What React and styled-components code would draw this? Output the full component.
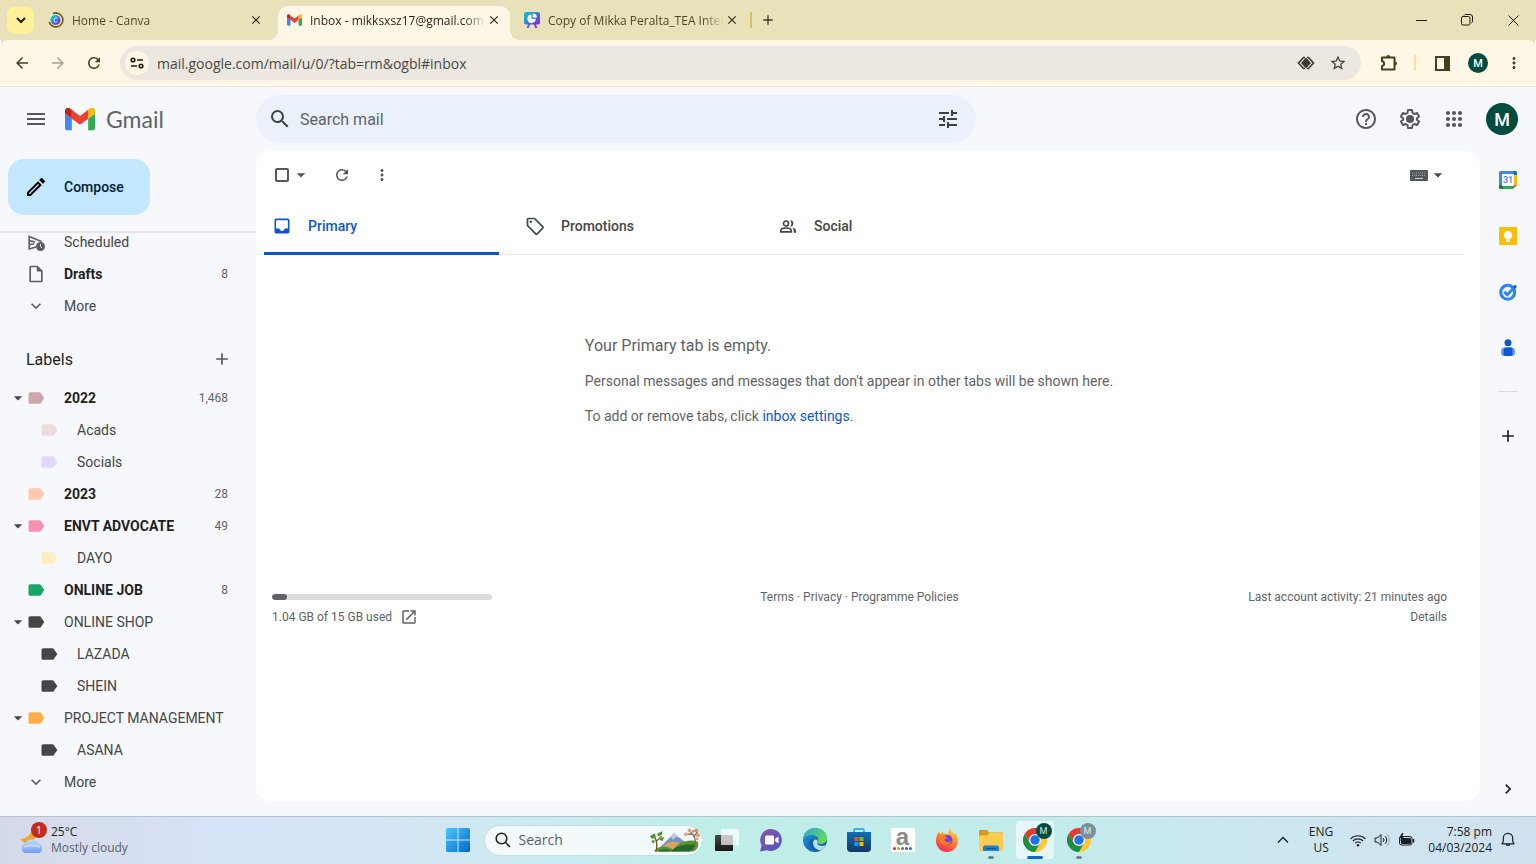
import React from 'react';
import styled, { createGlobalStyle, css } from 'styled-components';
import {
  MdAdd,
  MdArrowBack,
  MdArrowDropDown,
  MdArrowForward,
  MdClose,
  MdHelpOutline,
  MdInbox,
  MdKeyboardArrowDown,
  MdLabel,
  MdMenu,
  MdMoreVert,
  MdOpenInNew,
  MdOutlineEdit,
  MdOutlineInsertDriveFile,
  MdChevronRight,
  MdRefresh,
  MdSearch,
  MdStarOutline,
  MdTune,
} from 'react-icons/md';

const tabs = [
  { id: 'canva', title: 'Home - Canva', icon: <CanvaIcon /> },
  { id: 'gmail', title: 'Inbox - mikksxsz17@gmail.com', icon: <GmailIcon size={15} />, active: true },
  { id: 'copy', title: 'Copy of Mikka Peralta_TEA Inter', icon: <SlidesIcon /> },
];

const folders = [
  { name: 'Scheduled', icon: <ScheduledIcon /> },
  { name: 'Drafts', icon: <MdOutlineInsertDriveFile />, count: '8', unread: true },
  { name: 'More', icon: <MdKeyboardArrowDown /> },
];

const labels = [
  { name: '2022', color: '#cca6ac', count: '1,468', unread: true, open: true },
  { name: 'Acads', color: '#ebdbde', nested: true },
  { name: 'Socials', color: '#e3d7ff', nested: true },
  { name: '2023', color: '#ffc8af', count: '28', unread: true },
  { name: 'ENVT ADVOCATE', color: '#f691b2', count: '49', unread: true, open: true },
  { name: 'DAYO', color: '#fdedc1', nested: true },
  { name: 'ONLINE JOB', color: '#16a765', count: '8', unread: true },
  { name: 'ONLINE SHOP', color: '#444746', open: true },
  { name: 'LAZADA', color: '#444746', nested: true },
  { name: 'SHEIN', color: '#444746', nested: true },
  { name: 'PROJECT MANAGEMENT', color: '#ffad46', open: true },
  { name: 'ASANA', color: '#444746', nested: true },
];

const storage = { used: 1.04, total: 15 };

function App() {
  return (
    <Page>
      <GlobalStyle />
      <Browser />
      <Gmail />
      <Taskbar />
    </Page>
  );
}

function Browser() {
  return (
    <header>
      <TabStrip>
        <TabSearch aria-label="Search tabs">
          <svg width="10" height="10" viewBox="0 0 10 10" fill="none" stroke="currentColor" strokeWidth="2">
            <path d="M1 3l4 4 4-4" />
          </svg>
        </TabSearch>
        {tabs.map((tab) => (
          <Tab key={tab.id} $active={tab.active}>
            <Favicon>{tab.icon}</Favicon>
            <TabTitle>{tab.title}</TabTitle>
            <TabClose aria-label={`Close ${tab.title}`}>
              <MdClose />
            </TabClose>
          </Tab>
        ))}
        <TabDivider />
        <NewTab aria-label="New tab">
          <MdAdd />
        </NewTab>
        <WindowButtons>
          <WindowButton aria-label="Minimise">
            <svg width="11" height="11" viewBox="0 0 11 11" stroke="currentColor">
              <path d="M0 5.500h11" />
            </svg>
          </WindowButton>
          <WindowButton aria-label="Restore">
            <svg width="12" height="12" viewBox="0 0 12 12" fill="none" stroke="currentColor">
              <rect x="0.5" y="2.500" width="8.500" height="8.500" rx="1.500" />
              <path d="M3 1.500C3.300.8 3.800.5 4.500.5H9a2.500 2.500 0 0 1 2.500 2.500v4.500c0 .7-.4 1.200-1 1.500" />
            </svg>
          </WindowButton>
          <WindowButton aria-label="Close">
            <svg width="11" height="11" viewBox="0 0 11 11" stroke="currentColor">
              <path d="M.5.5l10 10M10.500.5l-10 10" />
            </svg>
          </WindowButton>
        </WindowButtons>
      </TabStrip>
      <AddressRow>
        <NavButton aria-label="Back">
          <MdArrowBack />
        </NavButton>
        <NavButton aria-label="Forward" $muted>
          <MdArrowForward />
        </NavButton>
        <NavButton aria-label="Reload">
          <MdRefresh />
        </NavButton>
        <Omnibox>
          <SiteInfo aria-label="Site information">
            <svg width="14" height="12" viewBox="0 0 14 12" fill="none" stroke="currentColor" strokeWidth="1.600">
              <circle cx="3" cy="3" r="1.800" />
              <path d="M7 3h6M1 9h6" />
              <circle cx="11" cy="9" r="1.800" />
            </svg>
          </SiteInfo>
          <Url aria-label="Address" defaultValue="mail.google.com/mail/u/0/?tab=rm&ogbl#inbox" />
          <OmniboxButton aria-label="Protocol handler">
            <svg width="18" height="14" viewBox="0 0 18 14" fill="none" stroke="currentColor" strokeWidth="1.600">
              <path d="M8 1.500H6.500L1.500 7l5 5.500H8M10 1.500h1.500l5 5.500-5 5.500H10" />
              <path d="M9 1.500L14 7l-5 5.500L4 7z" fill="currentColor" stroke="none" />
            </svg>
          </OmniboxButton>
          <OmniboxButton aria-label="Bookmark this tab">
            <MdStarOutline />
          </OmniboxButton>
        </Omnibox>
        <Tools>
          <NavButton aria-label="Extensions">
            <svg width="18" height="18" viewBox="0 0 18 18" fill="none" stroke="currentColor" strokeWidth="2">
              <path d="M2 3.500h12.500v12H2v-3.600c2.800-.2 2.800-4.500 0-4.700z" strokeLinejoin="round" />
              <path d="M6.200 3a2 2 0 0 1 4 0zM15 7.500a2 2 0 0 1 0 4z" fill="currentColor" stroke="none" />
            </svg>
          </NavButton>
          <ToolDivider />
          <NavButton aria-label="Side panel">
            <svg width="15" height="15" viewBox="0 0 15 15" fill="none" stroke="currentColor" strokeWidth="2">
              <path d="M1 1h13v13H1z" />
              <path d="M10 1h4v13h-4z" fill="currentColor" />
            </svg>
          </NavButton>
          <NavButton aria-label="Profile">
            <Avatar $size={20}>M</Avatar>
          </NavButton>
          <NavButton aria-label="Browser menu">
            <MdMoreVert />
          </NavButton>
        </Tools>
      </AddressRow>
    </header>
  );
}

function Gmail() {
  return (
    <GmailWrap>
      <GmailHeader>
        <Brand>
          <IconButton aria-label="Main menu" $size={24}>
            <MdMenu />
          </IconButton>
          <Logo href="#inbox">
            <GmailIcon size={30} />
            Gmail
          </Logo>
        </Brand>
        <SearchBox>
          <MdSearch aria-hidden="true" />
          <SearchInput type="text" aria-label="Search mail" placeholder="Search mail" />
          <IconButton aria-label="Search options" $size={24} $dark>
            <MdTune />
          </IconButton>
        </SearchBox>
        <HeaderActions>
          <IconButton aria-label="Support" $size={24}>
            <MdHelpOutline />
          </IconButton>
          <IconButton aria-label="Settings" $size={24}>
            <GearIcon />
          </IconButton>
          <IconButton aria-label="Google apps" $size={24}>
            <AppsIcon />
          </IconButton>
          <IconButton aria-label="Google Account" $size={32}>
            <Avatar $size={32}>M</Avatar>
          </IconButton>
        </HeaderActions>
      </GmailHeader>
      <Body>
        <Sidebar />
        <Mail />
        <SidePanel>
          <PanelButton aria-label="Calendar">
            <CalendarIcon />
          </PanelButton>
          <PanelButton aria-label="Keep">
            <KeepIcon />
          </PanelButton>
          <PanelButton aria-label="Tasks">
            <TasksIcon />
          </PanelButton>
          <PanelButton aria-label="Contacts">
            <ContactsIcon />
          </PanelButton>
          <PanelDivider />
          <PanelButton aria-label="Get add-ons">
            <MdAdd />
          </PanelButton>
          <HidePanel aria-label="Hide side panel">
            <MdChevronRight />
          </HidePanel>
        </SidePanel>
      </Body>
    </GmailWrap>
  );
}

function Sidebar() {
  return (
    <SidebarWrap>
      <ComposeArea>
        <Compose>
          <MdOutlineEdit />
          Compose
        </Compose>
      </ComposeArea>
      <Nav>
        {folders.map((item) => (
          <NavRow key={item.name} href="#folder" $unread={item.unread}>
            <Caret />
            <RowIcon>{item.icon}</RowIcon>
            <RowName>{item.name}</RowName>
            <Count>{item.count}</Count>
          </NavRow>
        ))}
        <LabelsHead>
          <LabelsTitle>Labels</LabelsTitle>
          <IconButton aria-label="Create new label" $size={20}>
            <MdAdd />
          </IconButton>
        </LabelsHead>
        {labels.map((item) => (
          <NavRow key={item.name} href="#label" $unread={item.unread} $nested={item.nested}>
            <Caret>{item.open && <MdArrowDropDown />}</Caret>
            <RowIcon $color={item.color}>
              <MdLabel />
            </RowIcon>
            <RowName>{item.name}</RowName>
            <Count>{item.count}</Count>
          </NavRow>
        ))}
        <NavRow href="#more">
          <Caret />
          <RowIcon>
            <MdKeyboardArrowDown />
          </RowIcon>
          <RowName>More</RowName>
        </NavRow>
      </Nav>
    </SidebarWrap>
  );
}

function Mail() {
  return (
    <Card>
      <MailToolbar>
        <SelectAll>
          <Checkbox type="checkbox" aria-label="Select all" />
          <IconButton aria-label="Select" $size={20}>
            <MdArrowDropDown />
          </IconButton>
        </SelectAll>
        <IconButton aria-label="Refresh" $size={18}>
          <MdRefresh />
        </IconButton>
        <IconButton aria-label="More options" $size={18}>
          <MdMoreVert />
        </IconButton>
        <InputTools aria-label="Input tools">
          <KeyboardIcon />
          <MdArrowDropDown />
        </InputTools>
      </MailToolbar>
      <MailTabs role="tablist">
        <MailTab role="tab" aria-selected="true" $active>
          <MdInbox />
          Primary
        </MailTab>
        <MailTab role="tab" aria-selected="false">
          <TagIcon />
          Promotions
        </MailTab>
        <MailTab role="tab" aria-selected="false">
          <PeopleIcon />
          Social
        </MailTab>
      </MailTabs>
      <Empty>
        <EmptyTitle>Your Primary tab is empty.</EmptyTitle>
        <EmptyText>Personal messages and messages that don't appear in other tabs will be shown here.</EmptyText>
        <EmptyText>
          To add or remove tabs, click <a href="#settings">inbox settings</a>.
        </EmptyText>
      </Empty>
      <MailFooter>
        <div>
          <BarSlot>
            <Bar>
              <BarFill style={{ width: `${(storage.used / storage.total) * 100}%` }} />
            </Bar>
          </BarSlot>
          <Storage>
            {storage.used} GB of {storage.total} GB used
            <a href="#storage" aria-label="Manage storage">
              <MdOpenInNew />
            </a>
          </Storage>
        </div>
        <Legal>
          <a href="#terms">Terms</a> · <a href="#privacy">Privacy</a> · <a href="#policies">Programme Policies</a>
        </Legal>
        <Activity>
          Last account activity: 21 minutes ago
          <br />
          <a href="#details">Details</a>
        </Activity>
      </MailFooter>
    </Card>
  );
}

function Taskbar() {
  return (
    <TaskbarWrap>
      <Weather>
        <WeatherIcon />
        <div>
          <Temp>25°C</Temp>
          <Sky>Mostly cloudy</Sky>
        </div>
        <Badge>1</Badge>
      </Weather>
      <Apps>
        <AppButton aria-label="Start">
          <WindowsIcon />
        </AppButton>
        <SearchSlot>
          <TaskSearch>
            <svg width="16" height="16" viewBox="0 0 16 16" fill="none" stroke="#222" strokeWidth="1.600">
              <circle cx="6.500" cy="6.500" r="5.300" />
              <path d="M10.500 10.500l4.500 4.500" />
            </svg>
            <TaskInput type="text" aria-label="Search" placeholder="Search" />
            <SceneIcon />
          </TaskSearch>
        </SearchSlot>
        <AppButton aria-label="Task view">
          <TaskViewIcon />
        </AppButton>
        <AppButton aria-label="Chat">
          <ChatIcon />
        </AppButton>
        <AppButton aria-label="Edge">
          <EdgeIcon />
        </AppButton>
        <AppButton aria-label="Microsoft Store">
          <StoreIcon />
        </AppButton>
        <AppButton aria-label="Amazon">
          <Amazon>
            a
            <Dots>
              <Dot $color="#e5202b" />
              <Dot $color="#f58a1f" />
              <Dot $color="#1ba04a" />
              <Dot $color="#8a35c9" />
              <Dot $color="#1672d8" />
            </Dots>
          </Amazon>
        </AppButton>
        <AppButton aria-label="Firefox">
          <FirefoxIcon />
        </AppButton>
        <AppButton aria-label="File Explorer" $running>
          <ExplorerIcon />
        </AppButton>
        <AppButton aria-label="Chrome" $focused>
          <ChromeIcon />
          <ProfileBadge $color="#004d40">M</ProfileBadge>
        </AppButton>
        <AppButton aria-label="Chrome, second profile" $running>
          <ChromeIcon />
          <ProfileBadge $color="#78909c">M</ProfileBadge>
        </AppButton>
      </Apps>
      <Tray>
        <svg width="12" height="8" viewBox="0 0 12 8" fill="none" stroke="currentColor" strokeWidth="1.300">
          <path d="M1 6.500l5-5 5 5" />
        </svg>
        <Language>
          ENG
          <br />
          US
        </Language>
        <TrayIcons>
          <svg width="16" height="13" viewBox="0 0 16 13" fill="none" stroke="currentColor" strokeWidth="1.100">
            <path d="M.6 4.800a10.500 10.500 0 0 1 14.800 0M2.900 7a7.300 7.300 0 0 1 10.200 0M5.200 9.200a4 4 0 0 1 5.600 0" />
            <circle cx="8" cy="11.200" r="1.200" fill="currentColor" stroke="none" />
          </svg>
          <svg width="16" height="14" viewBox="0 0 16 14" fill="none" stroke="currentColor">
            <path d="M1 5h2.500L7 1.500v11L3.500 9H1z" strokeLinejoin="round" />
            <path d="M9.200 5a3 3 0 0 1 0 4M11.200 3.200a5.500 5.500 0 0 1 0 7.600" />
            <path d="M13.200 1.500a8 8 0 0 1 0 11" opacity="0.3" />
          </svg>
          <svg width="17" height="14" viewBox="0 0 17 14" fill="none" stroke="currentColor">
            <rect x="1.500" y="3.500" width="12.500" height="8.500" rx="2" />
            <path d="M4 5.500h8.500v5H3.500V8z" fill="currentColor" />
            <path d="M15.500 6v3.500" strokeWidth="1.500" />
            <path d="M4 0L1 5h2L2 8.500 6 4H4l1.500-4z" fill="currentColor" stroke="none" />
          </svg>
        </TrayIcons>
        <Clock>
          7:58 pm
          <br />
          04/03/2024
        </Clock>
        <svg width="14" height="16" viewBox="0 0 14 16" fill="none" stroke="currentColor" strokeWidth="1.200">
          <path d="M1 11.800h12l-1.300-2.600V6a4.700 4.700 0 0 0-9.400 0v3.200zM5.200 12.200a1.900 1.900 0 0 0 3.600 0" strokeLinejoin="round" />
        </svg>
      </Tray>
    </TaskbarWrap>
  );
}

function GmailIcon({ size }) {
  return (
    <svg width={size} height={size * 0.8} viewBox="52 42 88 66" aria-hidden="true">
      <path fill="#4285f4" d="M58 108h14V74L52 59v43c0 3.320 2.690 6 6 6" />
      <path fill="#34a853" d="M120 108h14c3.320 0 6-2.690 6-6V59l-20 15" />
      <path fill="#fbbc04" d="M120 48v26l20-15v-8c0-7.420-8.470-11.650-14.400-7.200" />
      <path fill="#ea4335" d="M72 74V48l24 18 24-18v26L96 92" />
      <path fill="#c5221f" d="M52 51v8l20 15V48l-5.600-4.200c-5.940-4.450-14.400-.22-14.400 7.200" />
    </svg>
  );
}

function CanvaIcon() {
  return (
    <svg width="16" height="16" viewBox="0 0 16 16">
      <defs>
        <linearGradient id="canva" x1="0" y1="0" x2="1" y2="1">
          <stop offset="0.2" stopColor="#0bc3d2" />
          <stop offset="0.8" stopColor="#7d2ae8" />
        </linearGradient>
      </defs>
      <path d="M5 1.500A7 7 0 1 1 1.200 10" fill="none" stroke="#6b5b10" strokeWidth="1.600" />
      <circle cx="7.500" cy="8" r="5" fill="url(#canva)" />
      <path d="M9.300 6.600C9 5 6 5.300 6 8.300c0 2.400 2.300 2.300 3.300.9" fill="none" stroke="#e3f4ff" />
    </svg>
  );
}

function SlidesIcon() {
  return (
    <svg width="16" height="16" viewBox="0 0 16 16">
      <defs>
        <linearGradient id="slides" x1="0" y1="0" x2="1" y2="1">
          <stop offset="0.1" stopColor="#12bdc8" />
          <stop offset="0.8" stopColor="#7431ec" />
        </linearGradient>
      </defs>
      <path d="M2 0h12a2 2 0 0 1 2 2v8.500a2 2 0 0 1-2 2h-2l1.300 3.500h-2L10 12.500H6L4.700 16h-2L4 12.500H2a2 2 0 0 1-2-2V2a2 2 0 0 1 2-2z" fill="url(#slides)" />
      <path d="M7.500 2.500v4.300h4.300A4.200 4.200 0 1 1 7.500 2.500z" fill="#fff" />
      <path d="M8.800 1.600a4 4 0 0 1 4 4h-4z" fill="#fff" />
    </svg>
  );
}

function ScheduledIcon() {
  return (
    <svg viewBox="0 0 20 20" fill="none" stroke="currentColor" strokeWidth="1.600">
      <path d="M10 15l-6.800 2V4.500L15.500 9.500M3.200 8.500l6 1.500M3.200 12.800l5-1" />
      <circle cx="14.500" cy="14.500" r="4.500" fill="currentColor" stroke="none" />
      <path d="M14.500 12v2.700l1.500 1.300" stroke="#f6f8fc" strokeWidth="1" />
    </svg>
  );
}

function GearIcon() {
  return (
    <svg viewBox="0 0 24 24" fill="none" stroke="currentColor">
      <path
        d="M10 3h4l.5 2.900 1.900 1.100 2.700-1 2 3.400-2.200 1.800v1.600l2.200 1.800-2 3.400-2.700-1-1.900 1.100L14 21h-4l-.5-2.900L7.600 17l-2.700 1-2-3.400 2.200-1.800v-1.600L2.900 9.400l2-3.400 2.700 1 1.900-1.100z"
        strokeWidth="1.900"
        strokeLinejoin="round"
      />
      <circle cx="12" cy="12" r="4" fill="currentColor" stroke="none" />
    </svg>
  );
}

function AppsIcon() {
  return (
    <svg viewBox="0 0 24 24" fill="currentColor">
      {[6, 12, 18].map((y) => [6, 12, 18].map((x) => <circle key={`${x}-${y}`} cx={x} cy={y} r="2.100" />))}
    </svg>
  );
}

function KeyboardIcon() {
  return (
    <svg width="18" height="20" viewBox="0 0 18 20">
      <rect y="5" width="18" height="11" rx="1" fill="#55585b" />
      <path d="M2 8h14M2 10.500h14" stroke="#a9abad" strokeDasharray="1 1" />
      <path d="M5 13.500h8" stroke="#d5d6d7" />
    </svg>
  );
}

function TagIcon() {
  return (
    <svg viewBox="0 0 20 20" fill="none" stroke="currentColor" strokeWidth="1.700" strokeLinejoin="round">
      <path d="M2.500 3.500v6l8.200 8.300c.5.500 1 .5 1.500 0l5.500-5.600c.5-.5.5-1 0-1.500L9.500 2.500h-6a1 1 0 0 0-1 1z" />
      <circle cx="5.700" cy="5.700" r="1.200" fill="currentColor" stroke="none" />
    </svg>
  );
}

function PeopleIcon() {
  return (
    <svg viewBox="0 0 20 20" fill="none" stroke="currentColor" strokeWidth="1.700">
      <circle cx="8" cy="7.500" r="2.500" />
      <path d="M2.800 15.800v-1.300c0-1.800 2.700-2.500 5.200-2.500s5.200.7 5.200 2.500v1.300z" />
      <path d="M12 4.200a3.300 3.300 0 1 1 0 6.600 5 5 0 0 0 0-6.600zM13.800 11.500c2.200.4 4.200 1.300 4.200 3v2.200h-2.300v-2.200c0-1.300-.7-2.200-1.900-3z" fill="currentColor" stroke="none" />
    </svg>
  );
}

function CalendarIcon() {
  return (
    <svg viewBox="0 0 20 20">
      <path d="M1 2.500A1.500 1.500 0 0 1 2.500 1H15v4H5v10H1z" fill="#4285f4" />
      <path d="M15 1h2.500A1.500 1.500 0 0 1 19 2.500V5h-4z" fill="#1967d2" />
      <path d="M15 5h4v10h-4z" fill="#fbbc04" />
      <path d="M5 15h10v4H5z" fill="#34a853" />
      <path d="M1 15h4v4H2.500A1.500 1.500 0 0 1 1 17.500z" fill="#188038" />
      <path d="M15 15h4l-4 4z" fill="#ea4335" />
      <path d="M4 4h12v12H4z" fill="#fff" />
      <text x="10" y="13" fontSize="9" textAnchor="middle" fill="#4285f4" fontFamily="Roboto, sans-serif" fontWeight="500">
        31
      </text>
    </svg>
  );
}

function KeepIcon() {
  return (
    <svg viewBox="0 0 20 20">
      <rect x="1" y="1" width="18" height="18" rx="1" fill="#fbbc04" />
      <path d="M10 5a4.200 4.200 0 0 0-2.300 7.700V13.500h4.600v-.8A4.200 4.200 0 0 0 10 5zM8 14.300h4v1.400H8z" fill="#fff" />
    </svg>
  );
}

function TasksIcon() {
  return (
    <svg viewBox="0 0 20 20" fill="none">
      <circle cx="9.700" cy="10.300" r="7" stroke="#2684fc" strokeWidth="3" />
      <path d="M6.200 9.700l3 3L17.500 4.500" stroke="#2684fc" strokeWidth="3" />
      <path d="M15 4.500L17 2.800l1.800 1.800-2.200 2.200z" fill="#0b57d0" />
    </svg>
  );
}

function ContactsIcon() {
  return (
    <svg viewBox="0 0 20 20">
      <circle cx="10" cy="4.800" r="3.500" fill="#0b57d0" />
      <path d="M6.500 9.500h7a3.500 3.500 0 0 1 3.500 3.500v2a3 3 0 0 1-3 3H6a3 3 0 0 1-3-3v-2a3.500 3.500 0 0 1 3.500-3.500z" fill="#6ea1ff" />
      <path d="M8 9.500h5c1 0 1.500.8 1.500 1.800V16c0 1.200-1 2-2 2H7.500c-1.200 0-2-.8-2-2v-4c0-1.500 1-2.500 2.500-2.500z" fill="#0b57d0" />
    </svg>
  );
}

function WeatherIcon() {
  return (
    <svg width="24" height="28" viewBox="0 0 24 28">
      <defs>
        <linearGradient id="cloud" x1="0" y1="0" x2="0" y2="1">
          <stop offset="0" stopColor="#c6defc" />
          <stop offset="1" stopColor="#6f9cf0" />
        </linearGradient>
      </defs>
      <path d="M11 1c1 8-4 12-11 12 2 3 6 5 10 4 6-1 7-10 1-16z" fill="#f5a623" />
      <path d="M5 27a5 5 0 0 1 .3-9.500C6.500 14.500 9 13.500 12 13.500s5.500 1.500 6.300 4A5 5 0 0 1 19 27z" fill="url(#cloud)" />
      <path d="M4 21c3-2 13-2 16 0" stroke="#e7f1ff" strokeWidth="2" fill="none" opacity="0.6" />
    </svg>
  );
}

function WindowsIcon() {
  return (
    <svg width="24" height="24" viewBox="0 0 24 24">
      <defs>
        <linearGradient id="win" gradientUnits="userSpaceOnUse" x1="0" y1="0" x2="24" y2="24">
          <stop offset="0" stopColor="#4cc9f7" />
          <stop offset="1" stopColor="#0067c9" />
        </linearGradient>
      </defs>
      <path d="M1 0h10.500v11.500H0V1zM12.500 0H23l1 1v10.500H12.500zM0 12.500h11.500V24H1l-1-1zM12.500 12.500H24V23l-1 1H12.500z" fill="url(#win)" />
    </svg>
  );
}

function SceneIcon() {
  return (
    <svg width="50" height="26" viewBox="0 0 52 26">
      <path d="M10 21L25 6l19 15z" fill="#7494c4" />
      <path d="M25 6l6 5-4-1-3 3-2-3-4 3z" fill="#b9cbe6" />
      <path d="M17 17c6-4 12-3 17 1l-5 7H9z" fill="#d9a45c" />
      <path d="M4 25c4-6 13-7 20-2 5-8 17-12 26-8 1 5-1 8-5 10z" fill="#5a9432" />
      <path d="M22 25c5-6 14-8 25-7-1 4-3 6-6 7z" fill="#23692a" />
      <path d="M8 25c3-3 9-4 15-1l-3 1z" fill="#2c7430" />
      <path d="M6 25c2-6 1-11-1-15M6 15l6-6" stroke="#7a4a22" strokeWidth="1.300" fill="none" />
      <path d="M47 17c1-6-1-9-5-12M46 9l4-5M44 7l-7 0" stroke="#8a5a3b" strokeWidth="1.300" fill="none" />
      <path d="M0 9l5-3 1 4-4 2zM8 6l5-2-1 4-4 1zM11 11l4-1-2 4-3-1zM1 14l4-1-1 4z" fill="#45942f" />
      <circle cx="41" cy="3" r="2" fill="#dca58a" />
      <circle cx="45" cy="4" r="1.500" fill="#c78e70" />
      <circle cx="48" cy="3" r="2" fill="#cf9678" />
      <circle cx="37" cy="7" r="2" fill="#dfae94" />
      <circle cx="50" cy="8" r="2" fill="#d49b7d" />
      <circle cx="49" cy="12" r="1.500" fill="#dca58a" />
    </svg>
  );
}

function TaskViewIcon() {
  return (
    <svg width="24" height="24" viewBox="0 0 24 24">
      <defs>
        <linearGradient id="view" x1="0" y1="0" x2="0" y2="1">
          <stop offset="0" stopColor="#4a4a4a" />
          <stop offset="1" stopColor="#161616" />
        </linearGradient>
      </defs>
      <rect x="0" y="7" width="18" height="16" rx="1" fill="url(#view)" />
      <rect x="6" y="1" width="18" height="16" rx="1" fill="#fff" opacity="0.7" />
    </svg>
  );
}

function ChatIcon() {
  return (
    <svg width="24" height="24" viewBox="0 0 24 24">
      <defs>
        <linearGradient id="chat" x1="0" y1="0" x2="1" y2="1">
          <stop offset="0" stopColor="#8a5a9e" />
          <stop offset="1" stopColor="#4f52c8" />
        </linearGradient>
      </defs>
      <path d="M12.500 1A11 11 0 1 1 8 22.300L1 23.500l1.600-6.200A11 11 0 0 1 12.500 1z" fill="url(#chat)" />
      <rect x="6" y="7.500" width="9" height="9" rx="1.500" fill="#fff" />
      <path d="M16 11l3.500-2.500v7L16 13z" fill="#fff" />
    </svg>
  );
}

function EdgeIcon() {
  return (
    <svg width="24" height="24" viewBox="0 0 24 24">
      <defs>
        <linearGradient id="edgeTop" x1="0" y1="0" x2="1" y2="0.6">
          <stop offset="0" stopColor="#2aa4dc" />
          <stop offset="1" stopColor="#66d957" />
        </linearGradient>
        <linearGradient id="edgeLow" x1="0" y1="0" x2="1" y2="1">
          <stop offset="0" stopColor="#1b9de2" />
          <stop offset="1" stopColor="#0f4c9a" />
        </linearGradient>
      </defs>
      <circle cx="12" cy="12" r="12" fill="url(#edgeLow)" />
      <path d="M0 11C1 4 6 0 12 0c7 0 12 5 12 10 0 4-3 6-6 6-3 0-4-1-3.500-2.200C17 10 13 7 9 7c-4 0-8 2-9 4z" fill="url(#edgeTop)" />
      <path d="M14.500 13.800C13.500 16 16 18 19 18c1.500 0 3-.5 4-1.200-1 2.600-3 4.600-5.500 5.800C13 22 9.500 18 10 14.500c.2-1.500 1.300-2.600 2.500-3 1.500.3 2.300 1.200 2 2.300z" fill="#c8edf0" opacity="0.9" />
      <path d="M10 14c-1 5 3 8 7.500 8.600A12 12 0 0 1 8 20c-3-4-2-9 2-9z" fill="#1360ad" />
    </svg>
  );
}

function StoreIcon() {
  return (
    <svg width="24" height="24" viewBox="0 0 24 24">
      <defs>
        <linearGradient id="store" x1="0" y1="0" x2="0" y2="1">
          <stop offset="0" stopColor="#0f6fb8" />
          <stop offset="1" stopColor="#173765" />
        </linearGradient>
      </defs>
      <path d="M7 5V2.500C7 1.500 7.500 1 8.500 1h7c1 0 1.500.5 1.500 1.500V5" fill="none" stroke="#38b2e8" strokeWidth="1.800" />
      <path d="M0 4h24v16.500c0 2-1.300 3.500-3.500 3.500h-17C1.300 24 0 22.500 0 20.500z" fill="url(#store)" />
      <path d="M7.500 9h4v4h-4z" fill="#f25022" />
      <path d="M12.500 9h4v4h-4z" fill="#7fba00" />
      <path d="M7.500 14h4v4h-4z" fill="#00a4ef" />
      <path d="M12.500 14h4v4h-4z" fill="#ffb900" />
    </svg>
  );
}

function FirefoxIcon() {
  return (
    <svg width="24" height="24" viewBox="0 0 24 24">
      <defs>
        <linearGradient id="fox" x1="0.8" y1="0" x2="0.3" y2="1">
          <stop offset="0" stopColor="#ffe04a" />
          <stop offset="0.45" stopColor="#ff8a1f" />
          <stop offset="1" stopColor="#f0265e" />
        </linearGradient>
      </defs>
      <path d="M3.500 4l2 2.500 2-3 1 2.800c2-.8 3.800-.5 5 0C13 4 14 2 15.500.5c.5 3 3 4 4 6l.5-1.500c2 2 3 5 3 8a11 11 0 0 1-22 0c0-3.500 1-6 2.500-9z" fill="url(#fox)" />
      <circle cx="12.500" cy="12" r="5" fill="#7a3fe0" />
      <path d="M5 8c3-1 5-.5 6.500 1.200C13 10 11 11 9.500 11.500c0 3 5 3.500 7 1-1 5-8 6-11 2C4 12 4 10 5 8z" fill="#ff7a26" />
    </svg>
  );
}

function ExplorerIcon() {
  return (
    <svg width="24" height="24" viewBox="0 0 24 24">
      <path d="M0 3.500C0 2.500.5 2 1.500 2H8l2.500 2.500H23c.6 0 1 .4 1 1V9H0z" fill="#d9981e" />
      <path d="M0 7.500h8L10.500 5H23c.6 0 1 .4 1 1v16c0 .6-.4 1-1 1H1c-.6 0-1-.4-1-1z" fill="#fccb50" />
      <path d="M4 23v-3.500c0-1.300.7-2 2-2h12c1.300 0 2 .7 2 2V23z" fill="#1f7fd0" />
      <path d="M7 20h10v1H7z" fill="#0d4f8c" />
    </svg>
  );
}

function ChromeIcon() {
  return (
    <svg width="24" height="24" viewBox="0 0 48 48">
      <circle cx="24" cy="24" r="12" fill="#fff" />
      <path d="M24 12h20.800a24 24 0 0 0-41.600 0L13.600 30A12 12 0 0 1 24 12z" fill="#e33b2e" />
      <path d="M34.400 30L24 48a24 24 0 0 0 20.800-36H24a12 12 0 0 1 10.400 18z" fill="#fcc934" />
      <path d="M13.600 30L3.200 12A24 24 0 0 0 24 48l10.400-18a12 12 0 0 1-20.800 0z" fill="#1e8e3e" />
      <circle cx="24" cy="24" r="9.500" fill="#1a73e8" />
    </svg>
  );
}

const GlobalStyle = createGlobalStyle`
  * {
    box-sizing: border-box;
  }
  body {
    margin: 0;
    font-family: Roboto, 'Liberation Sans', sans-serif;
  }
  button {
    padding: 0;
    border: 0;
    background: none;
    color: inherit;
    font: inherit;
    cursor: pointer;
  }
  input {
    min-width: 0;
    border: 0;
    outline: 0;
    background: none;
    font: inherit;
  }
  a {
    color: inherit;
    text-decoration: none;
  }
  svg {
    display: block;
    flex-shrink: 0;
  }
`;

const center = css`
  display: flex;
  align-items: center;
  justify-content: center;
`;

const systemFont = css`
  font-family: 'Open Sans', 'Noto Sans', sans-serif;
`;

const Page = styled.div`
  display: flex;
  flex-direction: column;
  min-height: 100vh;
  background: #f6f8fc;
`;

const TabStrip = styled.div`
  ${systemFont}
  display: flex;
  align-items: center;
  height: 40px;
  padding-left: 7px;
  background: #e9e1b9;
  color: #4d4829;
  font-size: 12px;
`;

const TabSearch = styled.button`
  ${center}
  width: 27px;
  height: 27px;
  margin-right: 6px;
  border-radius: 8px;
  background: #fff19a;
  color: #1d1b10;
`;

const Tab = styled.div`
  position: relative;
  display: flex;
  align-items: center;
  align-self: flex-end;
  width: 232px;
  height: 34px;
  margin-right: 6px;
  padding: 0 8px 6px;
  border-radius: 10px 10px 0 0;
  ${(props) =>
    props.$active &&
    css`
      background: #fff7e6;
      color: #2a281c;
      &::before,
      &::after {
        content: '';
        position: absolute;
        bottom: 0;
        width: 10px;
        height: 10px;
      }
      &::before {
        right: 100%;
        background: radial-gradient(circle at 0 0, transparent 10px, #fff7e6 10px);
      }
      &::after {
        left: 100%;
        background: radial-gradient(circle at 100% 0, transparent 10px, #fff7e6 10px);
      }
    `}
`;

const Favicon = styled.span`
  ${center}
  width: 16px;
  height: 16px;
  margin-right: 8px;
`;

const TabTitle = styled.span`
  flex: 1;
  overflow: hidden;
  white-space: nowrap;
  mask-image: linear-gradient(to right, #000 88%, transparent);
`;

const TabClose = styled.button`
  ${center}
  width: 16px;
  height: 16px;
  color: #2a281c;
  font-size: 14px;
`;

const TabDivider = styled.span`
  width: 2px;
  height: 16px;
  margin-left: -4px;
  background: #d3c55a;
`;

const NewTab = styled.button`
  ${center}
  width: 32px;
  height: 28px;
  color: #3c3920;
  font-size: 16px;
`;

const WindowButtons = styled.div`
  display: flex;
  margin-left: auto;
`;

const WindowButton = styled.button`
  ${center}
  width: 46px;
  height: 40px;
  color: #1d1b10;
`;

const AddressRow = styled.div`
  ${systemFont}
  display: flex;
  align-items: center;
  height: 47px;
  padding: 0 4px;
  border-bottom: 1px solid #e8e3d3;
  border-radius: 8px 8px 0 0;
  background: #fff7e6;
  box-shadow: 0 -8px 0 -1px #e9e1b9;
  color: #4a4526;
`;

const NavButton = styled.button`
  ${center}
  width: 36px;
  height: 36px;
  color: ${(props) => (props.$muted ? '#a8a391' : '#45401f')};
  font-size: 18px;
`;

const Omnibox = styled.div`
  display: flex;
  align-items: center;
  flex: 1;
  height: 34px;
  margin-left: 8px;
  padding: 0 7px 0 5px;
  border-radius: 17px;
  background: #ece7e0;
`;

const SiteInfo = styled.button`
  ${center}
  width: 24px;
  height: 24px;
  border-radius: 50%;
  background: #fff7e6;
  color: #1d1b10;
`;

const Url = styled.input`
  flex: 1;
  padding: 0 8px;
  color: #4b483f;
  font-size: 14px;
`;

const OmniboxButton = styled.button`
  ${center}
  width: 32px;
  height: 32px;
  color: #3c3a30;
  font-size: 18px;
`;

const Tools = styled.div`
  display: flex;
  align-items: center;
  padding-left: 10px;
`;

const ToolDivider = styled.span`
  width: 2px;
  height: 16px;
  margin: 0 8px 0 7px;
  background: #f4e88f;
`;

const Avatar = styled.span`
  ${center}
  width: ${(props) => props.$size}px;
  height: ${(props) => props.$size}px;
  border-radius: 50%;
  background: #004d40;
  color: #fff;
  font-family: Roboto, sans-serif;
  font-size: ${(props) => (props.$size > 20 ? 18 : 11)}px;
  font-weight: 500;
`;

const GmailWrap = styled.div`
  display: flex;
  flex: 1;
  flex-direction: column;
`;

const GmailHeader = styled.div`
  display: flex;
  align-items: center;
  height: 64px;
  padding-right: 18px;
`;

const IconButton = styled.button`
  ${center}
  width: ${(props) => props.$size}px;
  height: ${(props) => props.$size}px;
  color: ${(props) => (props.$dark ? '#3c4043' : '#54575b')};
  font-size: ${(props) => props.$size}px;
  & > svg {
    width: 1em;
    height: 1em;
  }
`;

const Brand = styled.div`
  display: flex;
  align-items: center;
  flex-shrink: 0;
  width: 256px;
  padding-left: 24px;
`;

const Logo = styled.a`
  display: flex;
  align-items: center;
  gap: 11px;
  margin-left: 17px;
  color: #5f6368;
  font-family: Lato, sans-serif;
  font-size: 23px;
  line-height: 24px;
`;

const SearchBox = styled.div`
  display: flex;
  align-items: center;
  flex: 0 1 720px;
  height: 48px;
  padding: 0 16px 0 12px;
  border-radius: 24px;
  background: #eaf1fb;
  color: #3c4043;
  font-size: 24px;
`;

const SearchInput = styled.input`
  flex: 1;
  padding: 0 8px;
  color: #444746;
  font-size: 16px;
  &::placeholder {
    color: #5f6368;
  }
`;

const HeaderActions = styled.div`
  display: flex;
  align-items: center;
  gap: 20px;
  margin-left: auto;
`;

const Body = styled.div`
  display: flex;
  flex: 1;
`;

const SidebarWrap = styled.aside`
  flex-shrink: 0;
  width: 256px;
`;

const ComposeArea = styled.div`
  padding: 8px 8px 16px;
  border-bottom: 2px solid #e4e6ea;
`;

const Compose = styled.button`
  display: flex;
  align-items: center;
  gap: 16px;
  height: 56px;
  min-width: 142px;
  padding: 0 24px 0 16px;
  border-radius: 16px;
  background: #c2e7ff;
  color: #001d35;
  font-size: 14px;
  font-weight: 500;
  svg {
    width: 24px;
    height: 24px;
    color: #000;
  }
`;

const Nav = styled.nav`
  overflow: hidden;
  color: #444746;
  font-size: 14px;
  & > :first-child {
    margin-top: -7px;
  }
`;

const NavRow = styled.a`
  display: flex;
  align-items: center;
  height: 32px;
  padding: 0 28px 0 ${(props) => (props.$nested ? 23 : 10)}px;
  ${(props) =>
    props.$unread &&
    css`
      color: #1f1f1f;
      font-weight: 700;
    `}
`;

const Caret = styled.span`
  ${center}
  width: 16px;
  color: #444746;
  font-size: 20px;
`;

const RowIcon = styled.span`
  ${center}
  width: 20px;
  margin-right: 18px;
  color: ${(props) => props.$color || '#5b5e61'};
  font-size: 20px;
  svg {
    width: 20px;
    height: 20px;
  }
`;

const RowName = styled.span`
  flex: 1;
  padding-bottom: 1px;
  white-space: nowrap;
`;

const Count = styled.span`
  padding-bottom: 1px;
  color: #5f6368;
  font-size: 12px;
  font-weight: 400;
`;

const LabelsHead = styled.div`
  display: flex;
  align-items: center;
  justify-content: space-between;
  height: 60px;
  padding: 14px 24px 0 26px;
`;

const LabelsTitle = styled.span`
  color: #1f1f1f;
  font-size: 16px;
`;

const Card = styled.main`
  flex: 1;
  min-width: 0;
  margin-bottom: 15px;
  border-radius: 16px;
  background: #fff;
`;

const MailToolbar = styled.div`
  display: flex;
  align-items: center;
  height: 48px;
  padding: 0 32px 0 19px;
  gap: 22px;
`;

const SelectAll = styled.div`
  display: flex;
  align-items: center;
  gap: 2px;
`;

const Checkbox = styled.input`
  appearance: none;
  width: 14px;
  height: 14px;
  margin: 0;
  border: 2px solid #55585c;
  border-radius: 2px;
`;

const InputTools = styled.button`
  display: flex;
  align-items: center;
  margin-left: auto;
  color: #444746;
  font-size: 20px;
`;

const MailTabs = styled.div`
  display: flex;
  height: 56px;
  margin-right: 16px;
  padding-left: 8px;
  border-bottom: 1px solid #eceff1;
`;

const MailTab = styled.button`
  display: flex;
  align-items: center;
  gap: 16px;
  width: 235px;
  height: 56px;
  margin-right: 18px;
  padding-left: 8px;
  border-bottom: 3px solid ${(props) => (props.$active ? '#0b57d0' : 'transparent')};
  border-radius: 2px 2px 0 0;
  color: ${(props) => (props.$active ? '#0b57d0' : '#444746')};
  font-size: 14px;
  font-weight: 500;
  svg {
    width: 20px;
    height: 20px;
  }
`;

const Empty = styled.div`
  width: fit-content;
  margin: 0 auto;
  padding: 73px 38px 153px 0;
  color: #5f6368;
`;

const EmptyTitle = styled.div`
  font-size: 16px;
  line-height: 36px;
`;

const EmptyText = styled.div`
  font-size: 14px;
  line-height: 35px;
  a {
    color: #0b57d0;
  }
`;

const MailFooter = styled.footer`
  display: grid;
  grid-template-columns: 1fr auto 1fr;
  padding: 0 33px 0 16px;
  color: #5f6368;
  font-size: 12px;
  line-height: 20px;
`;

const BarSlot = styled.div`
  display: flex;
  align-items: center;
  height: 20px;
`;

const Bar = styled.div`
  width: 220px;
  height: 6px;
  border-radius: 3px;
  overflow: hidden;
  background: #dadce0;
`;

const BarFill = styled.div`
  height: 6px;
  border-radius: 3px;
  background: #5f6368;
`;

const Storage = styled.div`
  display: flex;
  align-items: center;
  gap: 8px;
  svg {
    width: 18px;
    height: 18px;
  }
`;

const Legal = styled.div`
  text-align: center;
`;

const Activity = styled.div`
  text-align: right;
`;

const SidePanel = styled.aside`
  display: flex;
  flex-direction: column;
  align-items: center;
  width: 56px;
  padding: 1px 0 7px;
`;

const PanelButton = styled.button`
  ${center}
  width: 56px;
  height: 56px;
  color: #1f1f1f;
  svg {
    width: 20px;
    height: 20px;
  }
`;

const PanelDivider = styled.div`
  width: 20px;
  height: 1px;
  margin: 15px 0 16px;
  background: #dadce0;
`;

const HidePanel = styled.button`
  ${center}
  width: 40px;
  height: 40px;
  margin-top: auto;
  color: #1f1f1f;
  font-size: 20px;
`;

const TaskbarWrap = styled.footer`
  ${systemFont}
  display: grid;
  grid-template-columns: 1fr auto 1fr;
  align-items: center;
  height: 48px;
  padding-bottom: 1px;
  border-top: 1px solid #b3c3cb;
  background: linear-gradient(90deg, #d5dae8 0%, #d6e2f6 14%, #d4e4f4 25%, #cde9f2 32%, #bfeee8 46%, #c3ecea 60%, #c2eceb 68%, #cce7ef 82%, #d0e1f0 100%);
  color: #1b1f24;
  font-size: 12px;
  line-height: 16px;
`;

const Weather = styled.button`
  position: relative;
  display: flex;
  align-items: center;
  gap: 7px;
  width: fit-content;
  margin-left: 20px;
  text-align: left;
`;

const Temp = styled.div`
  color: #1b1f24;
`;

const Sky = styled.div`
  color: #56606c;
`;

const Badge = styled.span`
  ${center}
  position: absolute;
  top: -2px;
  left: 11px;
  width: 16px;
  height: 16px;
  border-radius: 50%;
  background: #c42b1c;
  color: #fff;
  font-size: 11px;
`;

const Apps = styled.div`
  display: flex;
  align-items: center;
`;

const AppButton = styled.button`
  ${center}
  position: relative;
  width: 44px;
  height: 46px;
  ${(props) =>
    props.$focused &&
    css`
      isolation: isolate;
      &::before {
        content: '';
        position: absolute;
        inset: 4px 3px;
        z-index: -1;
        border-radius: 4px;
        background: rgba(255, 255, 255, 0.6);
      }
    `}
  ${(props) =>
    (props.$focused || props.$running) &&
    css`
      &::after {
        content: '';
        position: absolute;
        bottom: 4px;
        width: ${props.$focused ? 16 : 6}px;
        height: 3px;
        border-radius: 2px;
        background: ${props.$focused ? '#0a6ccf' : '#788488'};
      }
    `}
`;

const ProfileBadge = styled.span`
  ${center}
  position: absolute;
  top: 6px;
  right: 5px;
  width: 16px;
  height: 16px;
  border-radius: 50%;
  background: ${(props) => props.$color};
  color: #dfe9e7;
  font-family: Roboto, sans-serif;
  font-size: 9px;
`;

const SearchSlot = styled.div`
  width: 225px;
  padding: 0 2px 0 4px;
`;

const TaskSearch = styled.label`
  display: flex;
  align-items: center;
  height: 31px;
  padding-left: 10px;
  padding-right: 2px;
  border: 1px solid #c6dde2;
  border-radius: 16px;
  background: #f2fafb;
`;

const TaskInput = styled.input`
  flex: 1;
  width: 60px;
  padding: 0 8px;
  font-size: 14px;
  &::placeholder {
    color: #5a6165;
  }
`;

const Amazon = styled.span`
  display: flex;
  flex-direction: column;
  align-items: center;
  justify-content: flex-end;
  width: 24px;
  height: 24px;
  padding-bottom: 2px;
  background: #fff;
  color: #8a8a8a;
  font-family: 'Liberation Sans', sans-serif;
  font-size: 24px;
  font-weight: 700;
  line-height: 16px;
`;

const Dots = styled.span`
  display: flex;
  gap: 1px;
  margin-top: 2px;
`;

const Dot = styled.span`
  width: 3px;
  height: 3px;
  border-radius: 50%;
  background: ${(props) => props.$color};
`;

const Tray = styled.div`
  display: flex;
  align-items: center;
  justify-content: flex-end;
  padding-right: 21px;
`;

const Language = styled.div`
  margin: 0 17px 0 20px;
  text-align: center;
`;

const TrayIcons = styled.div`
  display: flex;
  align-items: center;
  gap: 8px;
  margin-right: 13px;
`;

const Clock = styled.div`
  margin-right: 9px;
  text-align: right;
`;

export default App;
